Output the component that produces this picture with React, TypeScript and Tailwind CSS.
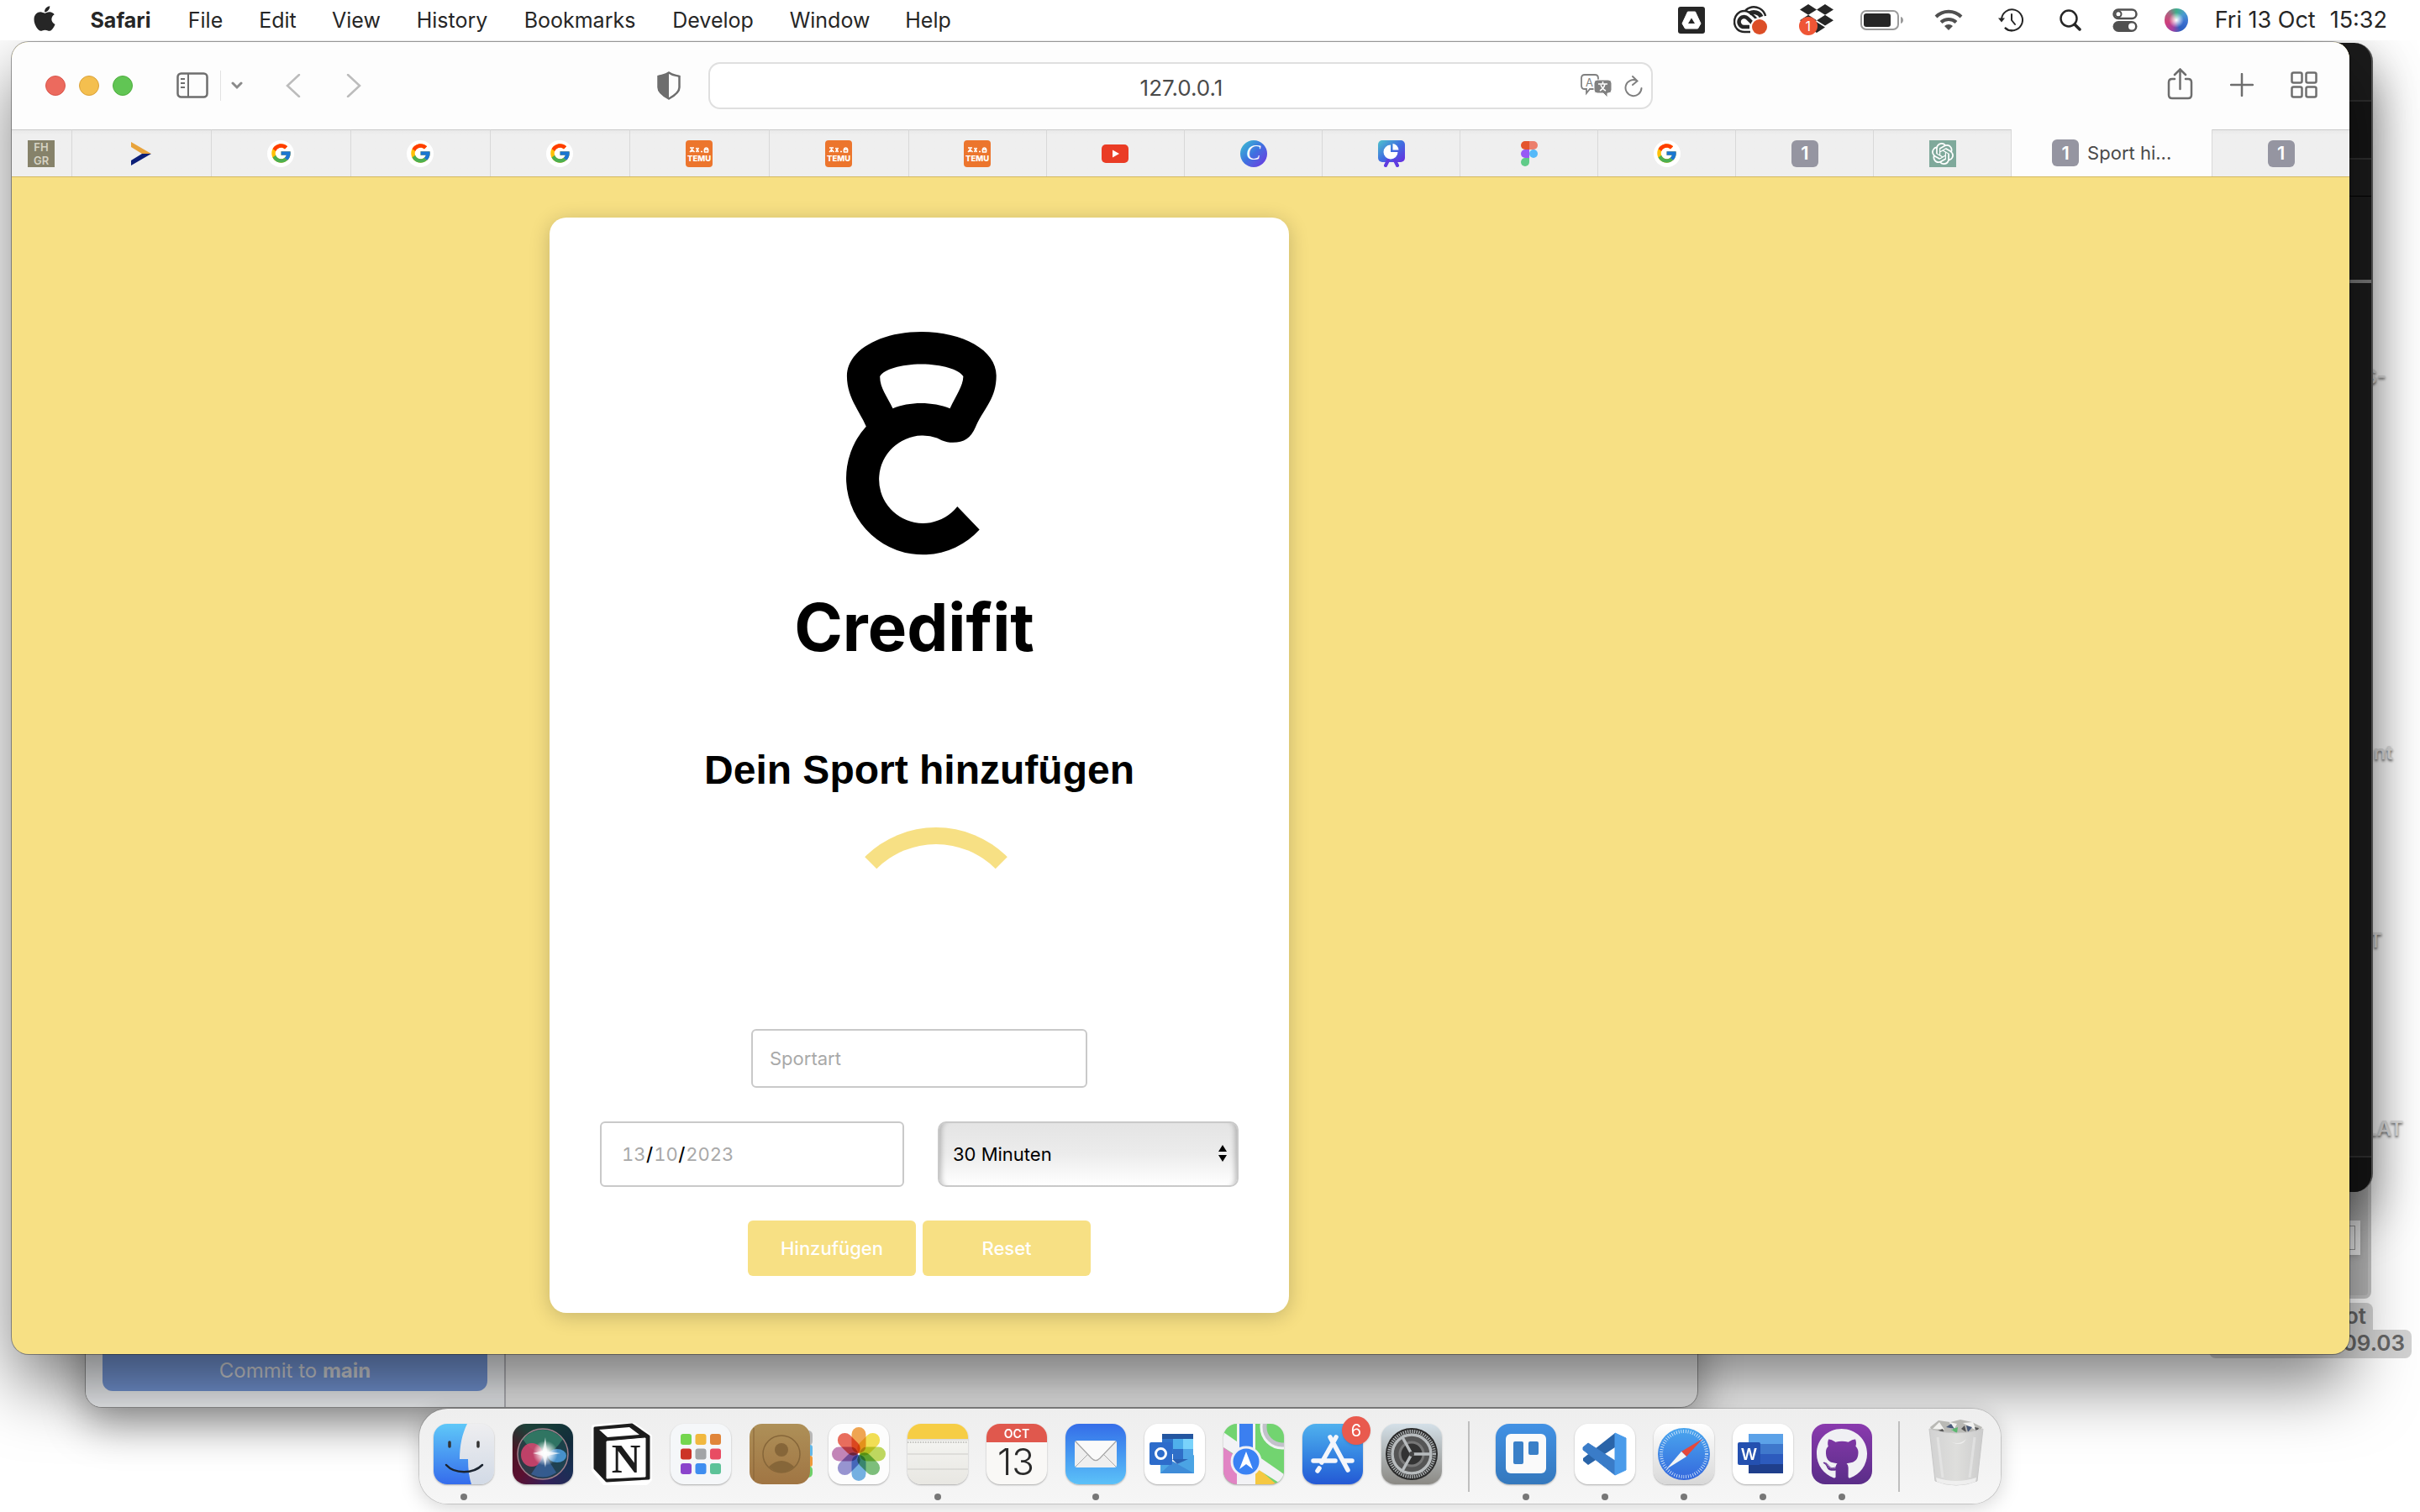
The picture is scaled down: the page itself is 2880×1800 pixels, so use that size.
import React, { useState } from "react";
import { FaApple, FaDropbox, FaGithub } from "react-icons/fa";
import { FcGoogle } from "react-icons/fc";
import { SiOpenai } from "react-icons/si";

/* ---------- Menu bar ---------- */

const menus = [
  { label: "Safari", cls: "w-[75px] mr-[42px] font-bold" },
  { label: "File", cls: "w-[43px] mr-[42px]" },
  { label: "Edit", cls: "w-[45px] mr-[42px]" },
  { label: "View", cls: "w-[58px] mr-[42px]" },
  { label: "History", cls: "w-[86px] mr-[42px]" },
  { label: "Bookmarks", cls: "w-[134px] mr-[42px]" },
  { label: "Develop", cls: "w-[99px] mr-[42px]" },
  { label: "Window", cls: "w-[95px] mr-[42px]" },
  { label: "Help", cls: "w-[55px]" },
];

function MenuBar() {
  return (
    <header className="relative z-30 flex h-12 items-center bg-white pr-[39px] pl-[38px] text-[25px] text-[#262626]">
      <button aria-label="Apple menu" className="mr-[38px] flex h-12 w-[30px] items-center pb-1">
        <FaApple size={34} className="-mx-0.5 shrink-0" />
      </button>
      <nav className="flex">
        {menus.map((m) => (
          <button key={m.label} className={`flex justify-center whitespace-nowrap leading-[46px] ${m.cls}`}>
            {m.label}
          </button>
        ))}
      </nav>
      <div className="ml-auto flex h-12 items-center">
        <svg className="mr-[34px]" width="32" height="32" viewBox="0 0 32 32">
          <rect width="32" height="32" rx="3" fill="#262626" />
          <path d="M11.500 6h9l6.500 14-3.500 6h-15L5 20z" fill="#fff" stroke="#fff" strokeLinejoin="round" />
          <path d="M16 13.500l4 6.500h-8z" fill="#262626" />
        </svg>
        <svg className="mr-[37px]" width="42" height="34" viewBox="0 0 42 34">
          <path d="M14 6C18 1 25 0 31 3c4 2 6 5 7 9" fill="none" stroke="#262626" strokeWidth="2.500" />
          <path d="M19 9c5-3 12-1 14 4" fill="none" stroke="#262626" strokeWidth="5" />
          <path d="M20 31h-7C6 31 1 26 1 19S6 6 13 6c5 0 8 3 11 6l6 6" fill="none" stroke="#262626" strokeWidth="2.500" />
          <path d="M19 25h-6a6 6 0 1 1 4-10l9 9" fill="none" stroke="#262626" strokeWidth="4.500" />
          <circle cx="31" cy="25" r="11" fill="#fff" />
          <circle cx="31" cy="25" r="9" fill="#dc4e27" />
        </svg>
        <span className="relative mr-[32px] flex h-9 w-10 items-center">
          <FaDropbox size={40} color="#262626" className="mb-1" />
          <span className="absolute top-[14px] -left-px flex size-[22px] items-center justify-center rounded-full bg-[#ef5535] text-base text-white">
            1
          </span>
        </span>
        <svg className="mr-[36px]" width="52" height="24" viewBox="0 0 52 24">
          <rect x="1" y="1" width="44" height="22" rx="6" fill="none" stroke="#9a9a9a" strokeWidth="2" />
          <rect x="4" y="4" width="32" height="16" rx="3" fill="#262626" />
          <path d="M48 8c4 1 4 7 0 8z" fill="#9a9a9a" />
        </svg>
        <svg className="mr-[42px]" width="34" height="26" viewBox="0 0 34 26" fill="none" stroke="#505050" strokeWidth="4">
          <path d="M2 9a21 21 0 0 1 30 0" />
          <path d="M8 15.500a13 13 0 0 1 18 0" />
          <path d="M17 25l-5-5a7 7 0 0 1 10 0z" fill="#505050" stroke="none" />
        </svg>
        <svg className="mr-[43px]" width="30" height="28" viewBox="0 0 30 28" fill="none" stroke="#262626" strokeWidth="2">
          <path d="M4 13A12.500 12.500 0 1 1 8 23" />
          <path d="M8 23q4 4 9 3.500" />
          <path d="M0 11.500h8l-4 5z" fill="#262626" stroke="none" />
          <path d="M16 7v7l4 5" strokeLinecap="round" />
        </svg>
        <svg className="mr-[37px]" width="26" height="26" viewBox="0 0 26 26" fill="none" stroke="#262626">
          <circle cx="11" cy="11" r="9.500" strokeWidth="2.500" />
          <path d="M18 18l6 6" strokeWidth="3.500" strokeLinecap="round" />
        </svg>
        <svg className="mr-[32px]" width="30" height="28" viewBox="0 0 30 28">
          <rect x="1.500" y="1.500" width="27" height="10.500" rx="5.200" fill="none" stroke="#505050" strokeWidth="2.500" />
          <circle cx="7" cy="6.800" r="3.500" fill="none" stroke="#505050" strokeWidth="2" />
          <rect x="0.500" y="15" width="29" height="13" rx="6.500" fill="#505050" />
          <circle cx="23" cy="21.500" r="4" fill="#fff" />
        </svg>
        <span className="mr-[32px] size-7 rounded-full bg-[radial-gradient(circle,#ffffff_0%,#ffffff00_45%),conic-gradient(#3fae8a,#4a9ad0,#3a6fd0,#2c5fc0,#a73fa0,#d03f7a,#b06080,#3fae8a)]" />
        <span className="mr-[17px] text-[27px] whitespace-nowrap">Fri 13 Oct</span>
        <span className="text-[27px]">15:32</span>
      </div>
    </header>
  );
}

/* ---------- Favicons ---------- */

function Google() {
  return (
    <span className="flex size-8 items-center justify-center rounded-full bg-white">
      <FcGoogle size={27} />
    </span>
  );
}

function Temu() {
  return (
    <svg width="32" height="32" viewBox="0 0 32 32">
      <rect width="32" height="32" rx="4" fill="#ec752d" />
      <path d="M5 9h5M7.500 9v5M5 14l2.500-3 3 3M12.500 9l3 5M15.500 9l-3 5M18 13.500h2M22.500 14q-1-5 2-5t2 5zM22 11h5" stroke="#fff" strokeWidth="1.500" fill="none" />
      <text x="16" y="25" textAnchor="middle" fontSize="9.500" fontWeight="800" fill="#fff">
        TEMU
      </text>
    </svg>
  );
}

function One() {
  return (
    <span className="flex size-8 shrink-0 items-center justify-center rounded-md bg-[#9595a1] text-[22px] font-semibold text-white">
      1
    </span>
  );
}

function Youtube() {
  return (
    <svg width="32" height="22" viewBox="0 0 32 22">
      <rect width="32" height="22" rx="5" fill="#ea3c25" />
      <path d="M13 6.500l8 4.500-8 4.500z" fill="#fff" />
    </svg>
  );
}

function Arrow() {
  return (
    <svg width="26" height="28" viewBox="0 0 26 28">
      <path d="M1 0l24 14h-11L1 6z" fill="#e8a33b" />
      <path d="M1 28l24-14H14L1 22z" fill="#0c1f78" />
    </svg>
  );
}

function Fhgr() {
  return (
    <svg width="32" height="32" viewBox="0 0 32 32">
      <rect width="32" height="32" fill="#86826a" />
      <g fontSize="13" fontWeight="600" fill="#d6d3c4" textAnchor="middle">
        <text x="16" y="13">FH</text>
        <text x="16" y="29">GR</text>
      </g>
    </svg>
  );
}

function Canva() {
  return (
    <span className="flex size-8 items-center justify-center rounded-full bg-linear-to-br from-[#3fc4cc] via-[#3f6fe0] to-[#6a2be0] pb-0.5 font-['Liberation_Serif',serif] text-[26px] leading-none text-white italic">
      C
    </span>
  );
}

function Board() {
  return (
    <svg width="32" height="32" viewBox="0 0 32 32">
      <defs>
        <linearGradient id="board" x1="0" y1="0" x2="1" y2="1">
          <stop offset="0" stopColor="#4fc4cc" />
          <stop offset="0.500" stopColor="#3f6fe0" />
          <stop offset="1" stopColor="#6a2be0" />
        </linearGradient>
      </defs>
      <rect width="32" height="26" rx="5" fill="url(#board)" />
      <path d="M12 24l-3 6M20 24l3 6" stroke="#5f3be0" strokeWidth="4" strokeLinecap="round" />
      <path d="M15 5.500V14h8.500a8.500 8.500 0 1 1-8.500-8.500z" fill="#fff" />
      <path d="M17.500 4a8 8 0 0 1 7 7.500h-7z" fill="#fff" />
    </svg>
  );
}

function Figma() {
  return (
    <svg width="20" height="30" viewBox="0 0 20 30">
      <path d="M10 0H5a5 5 0 0 0 0 10h5z" fill="#e4552d" />
      <path d="M10 0h5a5 5 0 0 1 0 10h-5z" fill="#ec7f6c" />
      <path d="M10 10H5a5 5 0 0 0 0 10h5z" fill="#985af5" />
      <circle cx="15" cy="15" r="5" fill="#55b9f9" />
      <path d="M10 20H5a5 5 0 1 0 5 5z" fill="#60cb88" />
    </svg>
  );
}

const tabs: { title: string; icon: React.ReactNode; cls: string; text?: string }[] = [
  { title: "FHGR", icon: <Fhgr />, cls: "flex-[71_1_0%]" },
  { title: "Moodle", icon: <Arrow />, cls: "flex-[166_1_0%]" },
  { title: "Google", icon: <Google />, cls: "flex-[166_1_0%]" },
  { title: "Google", icon: <Google />, cls: "flex-[166_1_0%]" },
  { title: "Google", icon: <Google />, cls: "flex-[166_1_0%]" },
  { title: "Temu", icon: <Temu />, cls: "flex-[166_1_0%]" },
  { title: "Temu", icon: <Temu />, cls: "flex-[166_1_0%]" },
  { title: "Temu", icon: <Temu />, cls: "flex-[164_1_0%]" },
  { title: "YouTube", icon: <Youtube />, cls: "flex-[164_1_0%]" },
  { title: "Canva", icon: <Canva />, cls: "flex-[164_1_0%]" },
  { title: "Presentation", icon: <Board />, cls: "flex-[164_1_0%]" },
  { title: "Figma", icon: <Figma />, cls: "flex-[164_1_0%]" },
  { title: "Google", icon: <Google />, cls: "flex-[164_1_0%]" },
  { title: "Local page", icon: <One />, cls: "flex-[164_1_0%]" },
  {
    title: "ChatGPT",
    icon: (
      <span className="flex size-8 items-center justify-center bg-[#7fa99b]">
        <SiOpenai size={26} color="#fff" />
      </span>
    ),
    cls: "flex-[164_1_0%]",
  },
  { title: "Sport hinzufügen", icon: <One />, cls: "flex-[239_1_0%]", text: "Sport hi..." },
  { title: "Local page", icon: <One />, cls: "flex-[164_1_0%]" },
];

/* ---------- Browser chrome ---------- */

function Toolbar() {
  return (
    <div className="grid h-26 shrink-0 grid-cols-[829px_1fr_829px] items-center bg-[#fdfdfd] text-[#6e6e6e]">
      <div className="flex items-center pr-[33px] pl-10">
        <div className="flex gap-4">
          <button aria-label="Close" className="size-6 rounded-full border border-[#d9564c] bg-[#ec6a5e]" />
          <button aria-label="Minimise" className="size-6 rounded-full border border-[#dba23a] bg-[#f4bf4f]" />
          <button aria-label="Zoom" className="size-6 rounded-full border border-[#4fae3f] bg-[#61c554]" />
        </div>
        <button aria-label="Sidebar" className="ml-[52px]">
          <svg width="38" height="32" viewBox="0 0 38 32" fill="none" stroke="currentColor" strokeWidth="2.500">
            <rect x="1.500" y="1.500" width="35" height="28" rx="4" />
            <path d="M14 2v27M5 8h5M5 13h5M5 18h5" strokeWidth="2" />
          </svg>
        </button>
        <span className="ml-3.5 h-9 w-px bg-[#e2e2e2]" />
        <button aria-label="Tab groups" className="ml-3">
          <svg width="14" height="10" viewBox="0 0 14 10" fill="none" stroke="#8a8a8a" strokeWidth="3" strokeLinecap="round">
            <path d="M2 2l5 5 5-5" />
          </svg>
        </button>
        <button aria-label="Back" className="ml-[51px]">
          <svg width="18" height="28" viewBox="0 0 18 28" fill="none" stroke="#bcbcbc" strokeWidth="2.500" strokeLinecap="round">
            <path d="M16 1L2 14l14 13" />
          </svg>
        </button>
        <button aria-label="Forward" className="ml-[54px]">
          <svg width="18" height="28" viewBox="0 0 18 28" fill="none" stroke="#bcbcbc" strokeWidth="2.500" strokeLinecap="round">
            <path d="M2 1l14 13L2 27" />
          </svg>
        </button>
        <button aria-label="Privacy report" className="ml-auto">
          <svg width="28" height="34" viewBox="0 0 28 34">
            <path d="M14 1.500c4 3 8 3 12.500 4.500v13c0 6-6 10-12.500 13.500C7.500 29 1.500 25 1.500 19V6C6 4.500 10 4.500 14 1.500z" fill="none" stroke="#6e6e6e" strokeWidth="2.500" />
            <path d="M14 1.500v31C7.500 29 1.500 25 1.500 19V6C6 4.500 10 4.500 14 1.500z" fill="#6e6e6e" />
          </svg>
        </button>
      </div>
      <div className="relative">
        <input
          aria-label="Address"
          defaultValue="127.0.0.1"
          className="h-14 w-full rounded-[14px] border-2 border-[#dfdfdf] bg-white pt-1 pl-0.5 text-center text-[26px] text-[#4a4a4a] outline-none"
        />
        <div className="absolute inset-y-0 right-3 flex items-center gap-3.5">
          <button aria-label="Translate">
            <svg width="38" height="28" viewBox="0 0 38 28">
              <path d="M5 1h12q4 0 4 4v9q0 4-4 4h-6l-4 5v-5H5q-4 0-4-4V5q0-4 4-4z" fill="none" stroke="#808080" strokeWidth="1.800" />
              <path d="M20 7h13q4 0 4 4v8q0 4-4 4h-1v5l-5-5h-7q-4 0-4-4v-8q0-4 4-4z" fill="#808080" stroke="#fff" />
              <text x="10.500" y="14.500" fontSize="13" textAnchor="middle" fill="#808080">A</text>
              <path d="M21 12h11M26.500 9v3M23 20q5-3 6-8M24 13q2 5 6 7" stroke="#fff" strokeWidth="1.500" fill="none" />
            </svg>
          </button>
          <button aria-label="Reload">
            <svg width="22" height="27" viewBox="0 0 22 27" fill="none" stroke="#808080" strokeWidth="2" strokeLinecap="round">
              <path d="M20.500 16A9.500 9.500 0 1 1 15 7M10 2l5.500 5.500L10 12" />
            </svg>
          </button>
        </div>
      </div>
      <div className="flex items-center justify-end gap-11 pr-[38px]">
        <button aria-label="Share" className="pb-1">
          <svg width="31" height="38" viewBox="0 0 31 38" fill="none" stroke="currentColor" strokeWidth="2.500" strokeLinecap="round">
            <path d="M9 13H6q-4 0-4 4v15q0 4 4 4h19q4 0 4-4V17q0-4-4-4h-3M15.500 25V2M9 8l6.500-6.500L22 8" />
          </svg>
        </button>
        <button aria-label="New tab" className="pb-0.5">
          <svg width="28" height="28" viewBox="0 0 28 28" stroke="currentColor" strokeWidth="2.500" strokeLinecap="round">
            <path d="M14 1v26M1 14h26" />
          </svg>
        </button>
        <button aria-label="Tab overview" className="pb-0.5">
          <svg width="32" height="32" viewBox="0 0 32 32" fill="none" stroke="currentColor" strokeWidth="2.500">
            <rect x="1.500" y="1.500" width="12" height="12" rx="2" />
            <rect x="18.500" y="1.500" width="12" height="12" rx="2" />
            <rect x="1.500" y="18.500" width="12" height="12" rx="2" />
            <rect x="18.500" y="18.500" width="12" height="12" rx="2" />
          </svg>
        </button>
      </div>
    </div>
  );
}

function TabStrip() {
  return (
    <div role="tablist" className="flex h-[57px] shrink-0 border-b border-[#d3b860]">
      {tabs.map((t, i) => (
        <button
          key={i}
          role="tab"
          aria-label={t.title}
          aria-selected={Boolean(t.text)}
          className={`flex min-w-0 items-center justify-center gap-2.5 border-r border-[#d8d8d8] text-[22px] text-[#4a4a4a] last:border-r-0 ${t.cls} ${
            t.text ? "bg-[#fdfdfd]" : "border-t border-t-[#cbcbcb] bg-linear-to-b from-[#e9e9e9] from-0% to-[#efefef] to-10%"
          }`}
        >
          {t.icon}
          {t.text && <span className="whitespace-nowrap">{t.text}</span>}
        </button>
      ))}
    </div>
  );
}

/* ---------- Page ---------- */

function Kettlebell() {
  return (
    <svg className="ml-1 shrink-0" width="192" height="275" viewBox="0 0 192 275" role="img" aria-label="Credifit logo">
      <path
        fillRule="evenodd"
        d="M30.800 117.700C22 98 8 83 7.900 57.500C8 28 46 5 96.500 5C146 5 185.700 27 185.700 57C185.700 84 172 95 162 116C156 131 148 136.800 134 136.800C124 136.800 119 133 115.300 131.400A52.200 52.200 0 1 0 139.300 213.100L165.700 240.500A91 91 0 1 1 30.800 117.700ZM62.500 96.300C56 82 47 72 47.200 58C52 50 72 43.600 96.500 43.600C121 43.600 141 50 146.400 58C146 70 138 80 130.500 96.300C110 88 82 88 62.500 96.300Z"
      />
    </svg>
  );
}

function Card() {
  const [date, setDate] = useState({ day: "13", month: "10", year: "2023" });
  const part = "bg-transparent p-0 text-[#a9a9a9] outline-none";
  const action = "h-[66px] w-[200px] rounded-md bg-[#f7e084] text-[22px] font-medium text-white";
  return (
    <main className="flex w-[880px] flex-col items-center rounded-[20px] bg-white px-15 pt-[131px] pb-11 shadow-[0_4px_24px_rgba(0,0,0,0.2)]">
      <Kettlebell />
      <p className="mt-9 mr-3 text-[78px] leading-[92px] font-bold text-black">Credifit</p>
      <h1 className="mt-[96px] font-['Liberation_Sans',Arial,sans-serif] text-5xl leading-[56px] font-bold whitespace-nowrap text-black">
        Dein Sport hinzufügen
      </h1>
      <div
        role="status"
        aria-label="Fortschritt"
        className="mt-10 ml-10 size-60 rounded-full border-20 border-transparent border-t-[#f7e084]"
      />
      <form className="flex w-full flex-col items-center gap-10" onSubmit={(e) => e.preventDefault()}>
        <input
          aria-label="Sportart"
          placeholder="Sportart"
          className="h-[70px] w-[400px] rounded-md border-2 border-[#c9c9c9] px-5 text-[22px] text-black outline-none placeholder:text-[#a9a9a9]"
        />
        <div className="flex w-full gap-10">
          <fieldset className="flex h-[78px] flex-1 items-center rounded-md border-2 border-[#c9c9c9] px-6 text-[22px] text-black tabular-nums">
            <input aria-label="Tag" value={date.day} onChange={(e) => setDate({ ...date, day: e.target.value })} className={`w-[29px] ${part}`} />
            <span className="mr-px font-medium">/</span>
            <input aria-label="Monat" value={date.month} onChange={(e) => setDate({ ...date, month: e.target.value })} className={`w-[29px] ${part}`} />
            <span className="mr-px font-medium">/</span>
            <input aria-label="Jahr" value={date.year} onChange={(e) => setDate({ ...date, year: e.target.value })} className={`w-16 ${part}`} />
          </fieldset>
          <div className="relative w-[358px]">
            <select
              aria-label="Dauer"
              className="h-[78px] w-full appearance-none rounded-[10px] border-2 border-[#c9c9c9] bg-linear-to-b from-[#e4e4e4] via-[#ececec] to-white px-4 text-[22px] text-black shadow-[inset_8px_0_6px_-6px_rgba(0,0,0,0.25),inset_-8px_0_6px_-6px_rgba(0,0,0,0.25)] outline-none"
            >
              <option>30 Minuten</option>
              <option>45 Minuten</option>
              <option>60 Minuten</option>
            </select>
            <svg className="pointer-events-none absolute top-[28px] right-3.5" width="10" height="20" viewBox="0 0 10 20">
              <path d="M5 0l5 8H0zM5 20l5-8H0z" />
            </svg>
          </div>
        </div>
        <div className="flex gap-2">
          <button type="submit" className={action}>Hinzufügen</button>
          <button type="reset" className={action}>Reset</button>
        </div>
      </form>
    </main>
  );
}

/* ---------- Windows behind the browser ---------- */

function EditorWindow() {
  return (
    <div className="absolute top-[51px] right-14 bottom-[381px] w-[600px] overflow-hidden rounded-[22px] border-r-2 border-[#555] bg-[#1b1b1b] shadow-[0_30px_60px_rgba(0,0,0,0.45)]">
      <div className="h-[68px]" />
      <div className="h-[71px] border-y-2 border-[#2e2e2e] bg-[#151515]" />
      <div className="h-11 border-b border-black" />
      <div className="h-[103px] border-b-4 border-[#777]" />
      <div className="absolute inset-x-0 bottom-0 h-[43px] border-t-2 border-[#2e2e2e] bg-[#141414]" />
    </div>
  );
}

function CommitWindow() {
  return (
    <div className="absolute bottom-[124px] left-[101px] flex h-[220px] w-[1920px] overflow-hidden rounded-[20px] border border-[#8f8f8f] bg-[#ededed] shadow-[0_20px_50px_rgba(0,0,0,0.4)]">
      <div className="flex w-[500px] items-end border-r-2 border-[#b5b5ba] bg-[#eef0f3] px-5 pb-[19px]">
        <button className="h-16 w-full rounded-xl bg-[#7496d6] pt-4 text-2xl text-[#d4d6da]">
          Commit to <b>main</b>
        </button>
      </div>
    </div>
  );
}

function DesktopItems() {
  const label = "absolute text-[24px] leading-7 font-semibold text-[#e2e2e2] [text-shadow:0_2px_3px_rgba(0,0,0,0.6)]";
  return (
    <>
      <span className={`right-10 top-[435px] ${label}`}>S-</span>
      <span className={`right-8 top-[882px] ${label}`}>nt</span>
      <span className={`right-[45px] top-[1106px] ${label}`}>T</span>
      <span className={`right-5 top-[1330px] ${label}`}>LAT</span>
      <div className="absolute top-[1400px] right-[58px] h-[146px] w-[140px] rounded-lg border-4 border-[#c6c6c6] bg-[#b8b8b8]">
        <div className="absolute top-[49px] right-[9px] h-[41px] w-20 bg-[#ececec] p-1.5 shadow-md">
          <div className="h-full border border-[#999]" />
        </div>
      </div>
      <div className="absolute top-[1551px] right-[10px] flex flex-col items-end text-[26px] leading-8 font-semibold text-[#656565]">
        <span className="mr-[46px] rounded-t-lg bg-[#d2d2d2] px-2">ot</span>
        <span className="w-[241px] rounded-lg bg-[#d2d2d2] px-2 pb-0.5 text-right">.09.03</span>
      </div>
    </>
  );
}

/* ---------- Dock ---------- */

function Tile({ bg, children }: { bg: string; children?: React.ReactNode }) {
  return (
    <svg width="72" height="72" viewBox="0 0 72 72" className={`overflow-hidden rounded-2xl shadow-[0_1px_2px_rgba(0,0,0,0.3)] ${bg}`}>
      {children}
    </svg>
  );
}

const Finder = (
  <Tile bg="bg-linear-to-b from-[#eeeef0] to-[#d2dae6]">
    <defs>
      <linearGradient id="finder" x1="0" y1="0" x2="0" y2="1">
        <stop offset="0" stopColor="#5fc8f8" />
        <stop offset="1" stopColor="#356cec" />
      </linearGradient>
    </defs>
    <path d="M0 0h40C34 12 31 26 31 42h10q0 18 4 30H0z" fill="url(#finder)" />
    <path d="M19 22v5M53 22v5" stroke="#333" strokeWidth="3.500" strokeLinecap="round" />
    <path d="M15 49c10 11 32 11 43 0" fill="none" stroke="#1b2430" strokeWidth="2.500" strokeLinecap="round" />
  </Tile>
);

const Siri = (
  <Tile bg="bg-[conic-gradient(from_20deg,#153a38,#122a3c,#1b2f55,#33205a,#5a1030,#4a1424,#1d4038,#153a38)]">
    <defs>
      <radialGradient id="glow">
        <stop offset="0" stopColor="#fff" />
        <stop offset="0.300" stopColor="#fff" stopOpacity="0.900" />
        <stop offset="1" stopColor="#fff" stopOpacity="0" />
      </radialGradient>
    </defs>
    <circle cx="36" cy="36" r="30" fill="#1f4a50" fillOpacity="0.700" stroke="#a0808c" strokeWidth="1.500" />
    <path d="M12 18Q36-4 60 18 50 34 38 36 20 32 12 18z" fill="#3f9c78" opacity="0.550" />
    <ellipse cx="23" cy="37" rx="13" ry="14" fill="#d8436f" opacity="0.850" />
    <ellipse cx="53" cy="38" rx="11" ry="8" fill="#4f9fe0" opacity="0.850" />
    <path d="M38 36L22 60q16 8 30-2z" fill="#3f6fb8" opacity="0.600" />
    <circle cx="39" cy="35" r="15" fill="url(#glow)" />
    <path d="M39 16l2 17 16 2-16 3-2 14-3-14-12-3 12-3z" fill="#fff" opacity="0.700" />
  </Tile>
);

const Notion = (
  <svg width="72" height="74" viewBox="0 0 72 74">
    <path d="M3 5L48 1l21 15v51l-4 4-47 3L3 56z" fill="#fff" stroke="#fff" strokeWidth="6" strokeLinejoin="round" />
    <path d="M4 6L48 2l20 14v50l-50 3L4 54z" fill="#1c1c1c" stroke="#1c1c1c" strokeWidth="3" strokeLinejoin="round" />
    <path d="M9 8l36-3 12 9-38 3z" fill="#fff" />
    <path d="M18 22l46-4v46l-46 2z" fill="#fff" stroke="#fff" strokeLinejoin="round" />
    <text x="41" y="59" fontFamily="Liberation Serif, serif" fontSize="48" fontWeight="700" textAnchor="middle" fill="#1c1c1c">
      N
    </text>
  </svg>
);

const launchColors = ["#74d64f", "#f1b83f", "#e0853a", "#cc3327", "#a2a4a6", "#e84c63", "#8b45cc", "#3f8ef0", "#5cc298"];
const Launchpad = (
  <Tile bg="bg-[#f5f7f9]">
    {launchColors.map((c, i) => (
      <rect key={c} x={12 + (i % 3) * 17.5} y={12 + Math.floor(i / 3) * 17.5} width="13" height="13" rx="3" fill={c} />
    ))}
  </Tile>
);

const Contacts = (
  <svg width="76" height="72" viewBox="0 0 76 72" className="-mr-1 shrink-0">
    <rect x="56" y="8" width="19" height="18" rx="5" fill="#b8b8b8" />
    <rect x="56" y="25" width="19" height="14" rx="3" fill="#62b8ea" />
    <rect x="56" y="38" width="19" height="13" rx="3" fill="#ee9a3c" />
    <rect x="56" y="50" width="19" height="14" rx="5" fill="#6fd06a" />
    <defs>
      <linearGradient id="book" x1="0" y1="0" x2="0" y2="1">
        <stop offset="0" stopColor="#ae9058" />
        <stop offset="1" stopColor="#a07543" />
      </linearGradient>
    </defs>
    <rect width="72" height="72" rx="15" fill="url(#book)" />
    <path d="M5 5v62" stroke="#856236" />
    <circle cx="38" cy="36" r="22" fill="none" stroke="#866639" strokeWidth="1.500" />
    <circle cx="38" cy="31" r="8" fill="#866639" />
    <path d="M23 51q15-14 30 0-15 14-30 0z" fill="#866639" />
  </svg>
);

const petals = ["#f09a3a", "#f2dc3c", "#b8d44a", "#6cb86a", "#62a8e0", "#8a86cc", "#bc74b0", "#e85a48"];
const Photos = (
  <Tile bg="bg-[#fdfdfd]">
    {petals.map((c, i) => (
      <rect key={c} x="27.500" y="4" width="17" height="31" rx="8.500" fill={c} opacity="0.880" transform={`rotate(${i * 45} 36 36)`} className="mix-blend-multiply" />
    ))}
  </Tile>
);

const Notes = (
  <Tile bg="bg-linear-to-b from-[#f8f8f6] to-[#e8e7e2]">
    <rect width="72" height="18" fill="#f6cd45" />
    <path d="M0 19h72M0 36h72M0 54h72" stroke="#cccbc8" />
    <path d="M0 22h72" stroke="#b5b5b0" strokeWidth="1.500" strokeDasharray="1.500 1.500" />
  </Tile>
);

const Calendar = (
  <Tile bg="bg-[#f9f8f6]">
    <rect width="72" height="22" fill="#e0584d" />
    <text x="36" y="17" fontSize="14" fontWeight="600" textAnchor="middle" fill="#fff">OCT</text>
    <text x="35" y="61" fontSize="44" fontWeight="300" textAnchor="middle" fill="#2a2a2a">13</text>
  </Tile>
);

const Mail = (
  <Tile bg="bg-linear-to-b from-[#366de8] to-[#5cc1f8]">
    <rect x="11" y="20" width="50" height="32" rx="3" fill="#efefef" />
    <path d="M12 51l17-17M60 51L43 34" stroke="#aaa" />
    <path d="M12 21l19 20q5 5 10 0l19-20" fill="#fafafa" stroke="#a5a5a5" strokeWidth="1.200" />
  </Tile>
);

const Outlook = (
  <Tile bg="bg-white">
    <rect x="21" y="12" width="37" height="24" fill="#2f74cc" />
    <path d="M21 12h37v6H21z" fill="#2456a0" />
    <path d="M34 18h12v12H34z" fill="#4fb0ec" />
    <path d="M46 18h12v12H46z" fill="#79d3fb" />
    <path d="M46 30h12v12H46z" fill="#4fa5e6" />
    <path d="M34 30h12v12H34z" fill="#2f6fc8" />
    <path d="M19 36l20 12 20-11v22H19z" fill="#4ba4e4" />
    <path d="M19 59h40L34 45z" fill="#3f8cd8" />
    <path d="M33 42h19l-13 6z" fill="#2a62b4" />
    <rect x="6" y="22" width="27" height="27" rx="2" fill="#2d6ccb" />
    <circle cx="19.500" cy="35.500" r="6" fill="none" stroke="#fff" strokeWidth="3" />
  </Tile>
);

const Maps = (
  <Tile bg="bg-[#72d470]">
    <path d="M0 28l72 50H0z" fill="#e184c4" />
    <path d="M38 72V50l34 30z" fill="#f5c842" />
    <path d="M0 10l72 50v14L0 28z" fill="#f2f2f5" />
    <path d="M16 0h22v72H16z" fill="#f2f2f5" />
    <path d="M19 0h16v40H19z" fill="#3b7ff0" />
    <circle cx="70" cy="4" r="23" fill="none" stroke="#f2f2f5" strokeWidth="7" />
    <circle cx="70" cy="4" r="21" fill="none" stroke="#c2c2ca" strokeWidth="5" />
    <circle cx="27" cy="45" r="17" fill="#3a82f4" stroke="#f0f0f5" strokeWidth="3" />
    <path d="M27 33l8 21-8-6-8 6z" fill="#fff" />
  </Tile>
);

const AppStore = (
  <span className="relative">
    <Tile bg="bg-linear-to-b from-[#50b1ee] to-[#2558d4]">
      <g stroke="#f4f6fb" strokeWidth="5.500" strokeLinecap="round" fill="none">
        <path d="M40 16L23 46M33 16l21 39M13 44h26M49 44h10M20 53l-2 3" />
      </g>
    </Tile>
    <span className="absolute -top-[9px] -right-[9px] flex size-[34px] items-center justify-center rounded-full bg-[#e95a4e] text-xl text-white shadow">6</span>
  </span>
);

const Settings = (
  <Tile bg="bg-linear-to-b from-[#d4e0e8] to-[#8b8984]">
    <circle cx="36" cy="36" r="31" fill="#2b2b2b" />
    <circle cx="36" cy="36" r="27" fill="none" stroke="#a8acae" strokeWidth="4" strokeDasharray="1.500 1.200" />
    <circle cx="36" cy="36" r="23" fill="#555" stroke="#b8bcbe" strokeWidth="3.500" />
    <circle cx="36" cy="36" r="14" fill="#333" stroke="#777" strokeWidth="3" />
    <path d="M36 36h23M36 36L25 16M36 36L25 56" stroke="#b8bcbe" strokeWidth="3.500" />
    <circle cx="36" cy="36" r="3" fill="#444" />
  </Tile>
);

const Trello = (
  <Tile bg="bg-linear-to-b from-[#4291e4] to-[#3478bd]">
    <rect x="12" y="12" width="48" height="47" rx="6" fill="#fafafa" />
    <rect x="21" y="21" width="12" height="27" rx="2" fill="#3a80c8" />
    <rect x="39" y="21" width="12" height="16" rx="2" fill="#3a80c8" />
  </Tile>
);

const VsCode = (
  <Tile bg="bg-white">
    <path d="M48 11v17L16 49l-6-5v-3z" fill="#2a64a8" />
    <path d="M48 61V44L16 23l-6 5v3z" fill="#3a7cc8" stroke="#3a7cc8" strokeLinejoin="round" />
    <path d="M48 11l13 6v38l-13 6z" fill="#4a9bea" stroke="#4a9bea" strokeLinejoin="round" />
  </Tile>
);

const SafariIcon = (
  <Tile bg="bg-linear-to-b from-white to-[#d8d8d8]">
    <defs>
      <linearGradient id="compass" x1="0" y1="0" x2="0" y2="1">
        <stop offset="0" stopColor="#4aa6ee" />
        <stop offset="1" stopColor="#3468dd" />
      </linearGradient>
    </defs>
    <circle cx="36" cy="36" r="31" fill="url(#compass)" />
    <circle cx="36" cy="36" r="27" fill="none" stroke="#dcebfb" strokeWidth="4" strokeDasharray="0.800 2" />
    <path d="M58 18L33 33l6 6z" fill="#e4483c" />
    <path d="M15 54l18-21 6 6z" fill="#f5f5f5" />
  </Tile>
);

const Word = (
  <Tile bg="bg-white">
    <rect x="19" y="12" width="41" height="12" fill="#5ca2e8" />
    <rect x="19" y="24" width="41" height="12" fill="#3f78cc" />
    <rect x="19" y="36" width="41" height="12" fill="#2d5bbd" />
    <rect x="19" y="48" width="41" height="11" fill="#1f3f8c" />
    <rect x="6" y="22" width="27" height="27" rx="2" fill="#2450b0" />
    <text x="19.500" y="43" fontSize="19" fontWeight="600" textAnchor="middle" fill="#fff">W</text>
  </Tile>
);

const Github = (
  <span className="flex size-[72px] items-center justify-center rounded-2xl bg-linear-to-b from-[#8a3aae] to-[#5a2d88]">
    <FaGithub size={62} color="#f0f0f4" />
  </span>
);

const Trash = (
  <svg width="72" height="84" viewBox="0 0 72 84" className="-mt-2 -mb-1 shrink-0">
    <defs>
      <linearGradient id="bin" x1="0" y1="0" x2="1" y2="0">
        <stop offset="0" stopColor="#d2d2d2" />
        <stop offset="0.500" stopColor="#dededc" />
        <stop offset="1" stopColor="#cccccc" />
      </linearGradient>
    </defs>
    <path d="M5 12l10-8 14 2 12-3 14 3 12 6-6 12H10z" fill="#b9b9b5" />
    <path d="M8 14l8-8 6 9zM28 6l9 2-5 9zM44 7l12-1 4 10z" fill="#f2f2f0" />
    <path d="M24 12l6-4 4 6zM48 10l7 2-5 6z" fill="#4a5a78" />
    <path d="M30 15l8-3-1 7z" fill="#5bb870" />
    <path d="M14 16l6-2 2 5zM42 14l4-4 2 8zM58 12l5 1-3 6z" fill="#555" />
    <path d="M4 14q32 10 64 0l-7 62q-25 10-50 0z" fill="url(#bin)" stroke="#c8c8c8" />
    <path d="M24 26q14 10 24 0-6 12-24 0z" fill="#f2f2f2" opacity="0.800" />
    <path d="M14 24l6 48M58 24l-6 48" stroke="#eeeeee" strokeWidth="3" opacity="0.500" />
    <path d="M12 72q24 8 48 0l-1 5q-23 8-46 0z" fill="#f4f4f4" opacity="0.800" />
  </svg>
);

const dock: ({ name: string; icon: React.ReactNode; open?: boolean } | null)[] = [
  { name: "Finder", icon: Finder, open: true },
  { name: "Siri", icon: Siri },
  { name: "Notion", icon: Notion },
  { name: "Launchpad", icon: Launchpad },
  { name: "Contacts", icon: Contacts },
  { name: "Photos", icon: Photos },
  { name: "Notes", icon: Notes, open: true },
  { name: "Calendar", icon: Calendar },
  { name: "Mail", icon: Mail, open: true },
  { name: "Outlook", icon: Outlook },
  { name: "Maps", icon: Maps },
  { name: "App Store", icon: AppStore },
  { name: "Settings", icon: Settings },
  null,
  { name: "Trello", icon: Trello, open: true },
  { name: "Visual Studio Code", icon: VsCode, open: true },
  { name: "Safari", icon: SafariIcon, open: true },
  { name: "Word", icon: Word, open: true },
  { name: "GitHub Desktop", icon: Github, open: true },
  null,
  { name: "Trash", icon: Trash },
];

function Dock() {
  return (
    <div className="absolute inset-x-0 bottom-2.5 z-20 flex justify-center">
      <nav className="flex gap-[22px] rounded-[34px] bg-linear-to-b from-[#eeeeee] to-[#f6f6f6] px-[17px] pt-[18px] pb-1 shadow-[0_0_0_1px_rgba(0,0,0,0.15),0_4px_24px_rgba(0,0,0,0.18)]">
        {dock.map((d, i) =>
          d ? (
            <button key={d.name} aria-label={d.name} className="flex w-[72px] flex-col items-center gap-[11px]">
              <span className="flex size-[72px] items-center justify-center">{d.icon}</span>
              <span className={`size-2 rounded-full ${d.open ? "bg-[#777]" : "bg-transparent"}`} />
            </button>
          ) : (
            <span key={i} className="mx-[9px] -mt-[3px] h-21 w-0.5 bg-[#bfbfbf]" />
          ),
        )}
      </nav>
    </div>
  );
}

export default function App() {
  return (
    <div className="relative min-h-screen w-full overflow-hidden bg-white font-[Inter,sans-serif]">
      <MenuBar />
      <DesktopItems />
      <CommitWindow />
      <EditorWindow />
      <section className="absolute top-[50px] right-[84px] bottom-[188px] left-3.5 z-10 flex flex-col overflow-hidden rounded-[20px] bg-[#f7e084] shadow-[0_0_0_1px_rgba(0,0,0,0.35),0_36px_80px_rgba(0,0,0,0.5)]">
        <Toolbar />
        <TabStrip />
        <div className="flex-1 pt-12 pl-[640px]">
          <Card />
        </div>
      </section>
      <Dock />
    </div>
  );
}
